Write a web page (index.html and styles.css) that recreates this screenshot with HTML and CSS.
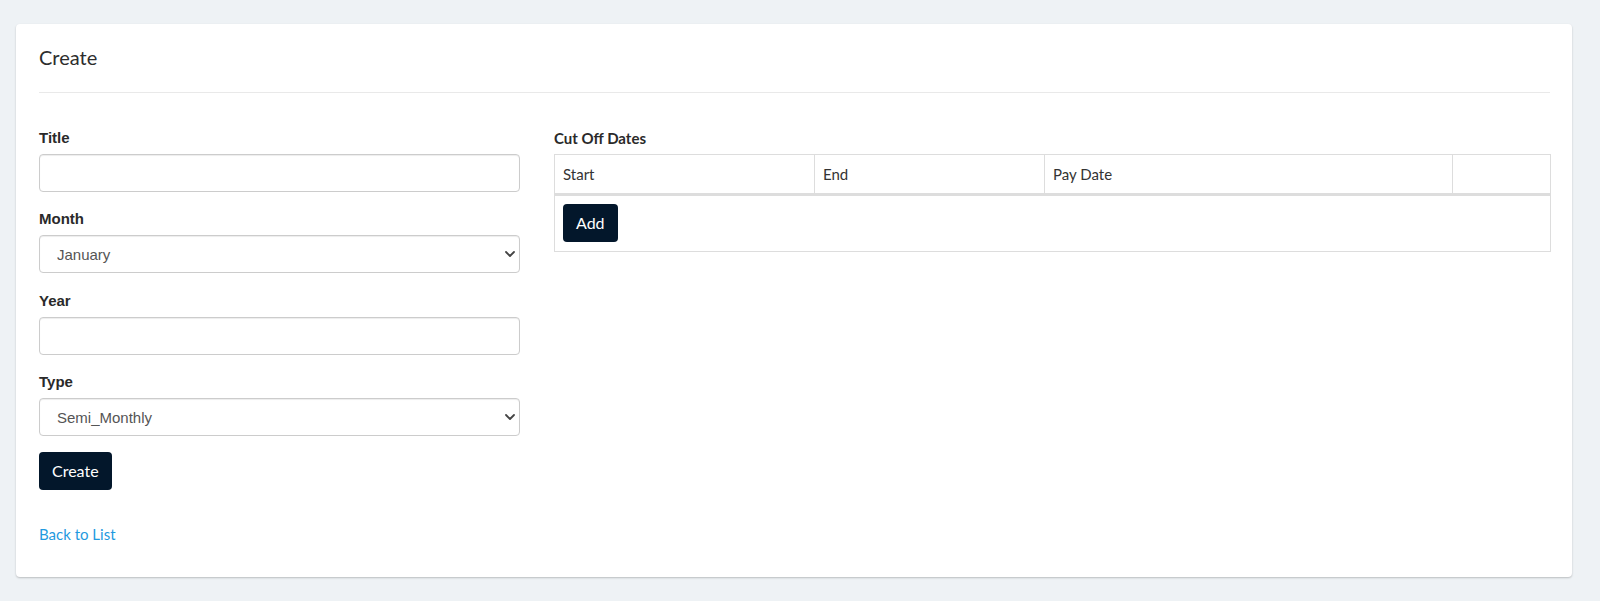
FILE: index.html
```html
<!DOCTYPE html>
<html lang="en">
<head>
<meta charset="utf-8">
<title>Create</title>
<link rel="stylesheet" href="styles.css">
</head>
<body>
<div class="page">
  <div class="card">
    <h4 class="card-title">Create</h4>
    <hr class="divider">
    <div class="layout">
      <form class="form-col">
        <div class="group">
          <label class="label">Title</label>
          <input class="control" type="text">
        </div>
        <div class="group">
          <label class="label">Month</label>
          <div class="select-wrap">
            <select class="control select"><option>January</option></select>
            <svg class="chev" width="10" height="6" viewBox="0 0 10 6"><path d="M1 1 L5 5 L9 1" fill="none" stroke="#444" stroke-width="1.8" stroke-linecap="round" stroke-linejoin="round"/></svg>
          </div>
        </div>
        <div class="group">
          <label class="label">Year</label>
          <input class="control" type="text">
        </div>
        <div class="group group-last">
          <label class="label">Type</label>
          <div class="select-wrap">
            <select class="control select"><option>Semi_Monthly</option></select>
            <svg class="chev" width="10" height="6" viewBox="0 0 10 6"><path d="M1 1 L5 5 L9 1" fill="none" stroke="#444" stroke-width="1.8" stroke-linecap="round" stroke-linejoin="round"/></svg>
          </div>
        </div>
        <button type="button" class="btn">Create</button>
      </form>
      <div class="dates-col">
        <div class="section-label">Cut Off Dates</div>
        <table class="dates">
          <colgroup>
            <col class="c-start"><col class="c-end"><col class="c-pay"><col class="c-act">
          </colgroup>
          <thead>
            <tr><th>Start</th><th>End</th><th>Pay Date</th><th></th></tr>
          </thead>
          <tbody>
            <tr><td colspan="4"><button type="button" class="btn">Add</button></td></tr>
          </tbody>
        </table>
      </div>
    </div>
    <div class="back"><a href="#" class="link">Back to List</a></div>
  </div>
</div>
</body>
</html>
```

FILE: styles.css
```css
html, body {
  margin: 0;
  background: #eef2f5;
}
body {
  font-family: Lato, "Open Sans", sans-serif;
  color: #333;
}
.page {
  padding: 24px 28px 24px 16px;
}
.card {
  background: #fff;
  border-radius: 4px;
  box-shadow: 0 1px 2px rgba(0, 0, 0, 0.22);
  padding: 21px 22px 32px 23px;
}
.card-title {
  margin: 0;
  font-size: 20px;
  font-weight: 400;
  line-height: 24px;
  color: #2d2d2d;
}
.divider {
  margin: 23px 0 0;
  border: 0;
  border-top: 1px solid #e9e9e9;
  height: 0;
}
.layout {
  display: grid;
  grid-template-columns: 481px 1fr;
  column-gap: 34px;
  margin-top: 34.5px;
  align-items: start;
}
.form-col {
  margin: 0;
}
.group {
  margin-bottom: 17.5px;
}
.group-last {
  margin-bottom: 16px;
}
.label {
  display: block;
  font-family: "Liberation Sans", Arial, sans-serif;
  font-weight: 700;
  font-size: 15px;
  line-height: 20px;
  margin-bottom: 6px;
  color: #2a2a2a;
}
.control {
  display: block;
  box-sizing: border-box;
  width: 100%;
  height: 38px;
  margin: 0;
  padding: 6px 12px;
  border: 1px solid #ccc;
  border-radius: 4px;
  background: #fff;
  box-shadow: inset 0 1px 1px rgba(0, 0, 0, 0.075);
  font-family: "Liberation Sans", Arial, sans-serif;
  font-size: 15px;
  color: #555;
  outline: none;
}
.select-wrap {
  position: relative;
}
.select {
  -webkit-appearance: none;
  appearance: none;
  padding-left: 17px;
}
.chev {
  position: absolute;
  right: 5px;
  top: 16px;
  pointer-events: none;
}
.btn {
  display: inline-block;
  box-sizing: border-box;
  height: 38px;
  padding: 8px 13px;
  border: 0;
  border-radius: 4px;
  background: #03172b;
  color: #fff;
  font-family: Lato, "Open Sans", sans-serif;
  font-size: 16px;
  line-height: 22px;
  cursor: pointer;
}
.section-label {
  font-weight: 700;
  font-size: 15px;
  line-height: 21px;
  margin-bottom: 5px;
  color: #2a2a2a;
}
.dates {
  width: 100%;
  border-collapse: collapse;
  table-layout: fixed;
  font-size: 15px;
}
.c-start { width: 260px; }
.c-end { width: 230px; }
.c-pay { width: 408px; }
.c-act { width: 98px; }
.dates th {
  border: 1px solid #ddd;
  border-bottom: 3px solid #ddd;
  padding: 9px 8px 8px;
  font-weight: 400;
  text-align: left;
  line-height: 21px;
  color: #333;
}
.dates td {
  border: 1px solid #ddd;
  padding: 8px 8px 9px;
  line-height: 21px;
}
.back {
  margin-top: 34px;
  line-height: 21px;
  font-size: 15px;
}
.link {
  color: #1f9ae0;
  text-decoration: none;
}
```
